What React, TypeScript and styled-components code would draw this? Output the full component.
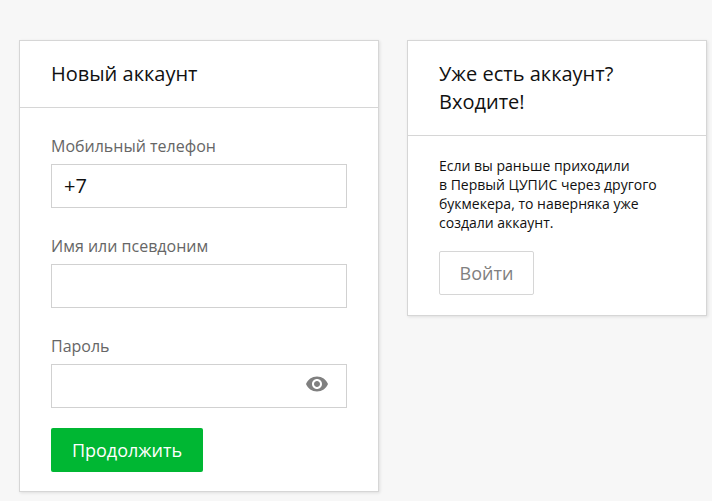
import { createGlobalStyle, styled } from "styled-components";

const GlobalStyle = createGlobalStyle`
  html, body {
    margin: 0;
    padding: 0;
    background: #f7f7f7;
    font-family: "Open Sans", "Noto Sans", sans-serif;
  }
`;

function EyeIcon() {
  return (
    <svg width="24" height="24" viewBox="0 0 24 24" fill="#808080">
      <path d="M12 4.5C7 4.5 2.73 7.61 1 12c1.73 4.39 6 7.5 11 7.5s9.27-3.11 11-7.5c-1.73-4.39-6-7.5-11-7.5zM12 17c-2.76 0-5-2.24-5-5s2.24-5 5-5 5 2.24 5 5-2.24 5-5 5zm0-8c-1.66 0-3 1.34-3 3s1.34 3 3 3 3-1.34 3-3-1.34-3-3-3z" />
    </svg>
  );
}

export default function App() {
  return (
    <>
      <GlobalStyle />
      <Page>
        <RegisterCard>
          <CardHeader>
            <Title>Новый аккаунт</Title>
          </CardHeader>
          <RegisterBody>
            <Fields>
              <Field>
                <Label>Мобильный телефон</Label>
                <InputBox>+7</InputBox>
              </Field>
              <Field>
                <Label>Имя или псевдоним</Label>
                <InputBox />
              </Field>
              <Field>
                <Label>Пароль</Label>
                <InputBox>
                  <EyeToggle>
                    <EyeIcon />
                  </EyeToggle>
                </InputBox>
              </Field>
            </Fields>
            <SubmitButton>Продолжить</SubmitButton>
          </RegisterBody>
        </RegisterCard>
        <LoginCard>
          <CardHeader>
            <Title>
              Уже есть аккаунт?
              <br />
              Входите!
            </Title>
          </CardHeader>
          <LoginBody>
            <Note>
              Если вы раньше приходили
              <br />в Первый ЦУПИС через другого
              <br />
              букмекера, то наверняка уже
              <br />
              создали аккаунт.
            </Note>
            <LoginButton>Войти</LoginButton>
          </LoginBody>
        </LoginCard>
      </Page>
    </>
  );
}

const Page = styled.div`
  display: flex;
  align-items: flex-start;
  gap: 28px;
  padding: 40px 0 0 19px;
  height: 501px;
  box-sizing: border-box;
  overflow: hidden;
`;

const Card = styled.section`
  box-sizing: border-box;
  flex: none;
  background: #fff;
  border: 1px solid #d6d6d6;
  box-shadow: 1px 1px 3px rgba(0, 0, 0, 0.1);
`;

const RegisterCard = styled(Card)`
  width: 360px;
`;

const LoginCard = styled(Card)`
  width: 300px;
`;

const CardHeader = styled.header`
  padding: 19px 31px;
  border-bottom: 1px solid #d6d6d6;
`;

const Title = styled.h2`
  margin: 0;
  font-size: 20px;
  line-height: 28px;
  font-weight: 400;
  color: #111;
`;

const RegisterBody = styled.div`
  display: flex;
  flex-direction: column;
  gap: 20px;
  padding: 27px 31px 19px;
`;

const Fields = styled.div`
  display: flex;
  flex-direction: column;
  gap: 27px;
`;

const Field = styled.div`
  display: flex;
  flex-direction: column;
  gap: 7px;
`;

const Label = styled.label`
  font-size: 16px;
  line-height: 22px;
  color: #666;
`;

const InputBox = styled.div`
  box-sizing: border-box;
  height: 44px;
  display: flex;
  align-items: center;
  justify-content: space-between;
  padding: 0 17px 2px 12px;
  border: 1px solid #d1d1d1;
  font-size: 20px;
  color: #111;
`;

const EyeToggle = styled.span`
  display: flex;
  margin-left: auto;
  margin-bottom: 2px;
`;

const SubmitButton = styled.button`
  align-self: flex-start;
  width: 152px;
  height: 44px;
  padding: 0;
  border: 0;
  border-radius: 2px;
  background: #00b733;
  color: #fff;
  font: 400 18px "Open Sans", sans-serif;
`;

const LoginBody = styled.div`
  display: flex;
  flex-direction: column;
  align-items: flex-start;
  gap: 19px;
  padding: 20px 31px 20px;
`;

const Note = styled.p`
  margin: 0;
  font-size: 14px;
  line-height: 19px;
  color: #111;
`;

const LoginButton = styled.button`
  box-sizing: border-box;
  width: 95px;
  height: 44px;
  padding: 0;
  background: #fff;
  border: 1px solid #d6d6d6;
  border-radius: 2px;
  color: #808080;
  font: 400 18px "Open Sans", sans-serif;
`;
